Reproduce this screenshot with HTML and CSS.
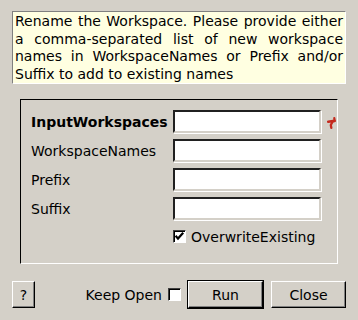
FILE: index.html
```html
<!DOCTYPE html>
<html>
<head>
<meta charset="utf-8">
<link rel="stylesheet" href="styles.css">
</head>
<body>
<div class="dlg">
  <div class="desc">Rename the Workspace. Please provide either a comma-separated list of new workspace names in WorkspaceNames or Prefix and/or Suffix to add to existing names</div>
  <div class="group">
    <div class="grid">
      <span class="lbl bold">InputWorkspaces</span>
      <span class="inp"></span>
      <svg class="req" width="9" height="12" viewBox="0 0 9 12"><path d="M1.2 4.8 L7.6 3.9" stroke="#c42a1e" stroke-width="2.6" stroke-linecap="round" fill="none"/><path d="M7.6 3.9 L7.3 1.2" stroke="#c42a1e" stroke-width="2.2" stroke-linecap="round" fill="none"/><path d="M5.4 5 L3.8 8 L4.3 10.8" stroke="#c42a1e" stroke-width="2.3" stroke-linecap="round" stroke-linejoin="round" fill="none"/></svg>
      <span class="lbl">WorkspaceNames</span>
      <span class="inp"></span>
      <span></span>
      <span class="lbl">Prefix</span>
      <span class="inp"></span>
      <span></span>
      <span class="lbl">Suffix</span>
      <span class="inp"></span>
      <span></span>
    </div>
    <div class="chkrow">
      <span class="chk"><svg width="11" height="11" viewBox="0 0 11 11"><path d="M1.6 4.8 L4 7.6 L9.2 1.8" stroke="#000" stroke-width="2.2" fill="none"/></svg></span>
      <span class="chktext">OverwriteExisting</span>
    </div>
  </div>
  <div class="footer">
    <span class="btn help">?</span>
    <span class="keep">Keep Open</span>
    <span class="chk"></span>
    <span class="default"><span class="btn run">Run</span></span>
    <span class="btn close">Close</span>
  </div>
</div>
</body>
</html>
```
FILE: styles.css
```css
html, body {
  margin: 0;
  padding: 0;
  background: #d4d0c8;
}
body {
  width: 358px;
  height: 320px;
  overflow: hidden;
  font-family: "DejaVu Sans", sans-serif;
  font-size: 14px;
  color: #000;
}
.dlg {
  display: flex;
  flex-direction: column;
}
.desc {
  margin: 11px 12px 0 12px;
  background: #ffffe1;
  border-top: 1px solid #808080;
  border-left: 1px solid #808080;
  border-right: 1px solid #ffffff;
  border-bottom: 1px solid #ffffff;
  padding: 1px 2px 0 2px;
  line-height: 17.5px;
  text-align: justify;
  height: 70px;
  box-sizing: content-box;
}
.group {
  margin: 15px 20px 0 20px;
  border-top: 1px solid #000;
  border-left: 1px solid #000;
  border-right: 1px solid #fff;
  border-bottom: 1px solid #fff;
  padding: 10px 0 0 10px;
  box-sizing: content-box;
  height: 153px;
}
.grid {
  display: grid;
  grid-template-columns: 136px 148px 9px;
  grid-auto-rows: 23px;
  row-gap: 6px;
  column-gap: 6px;
  align-items: center;
}
.lbl {
  white-space: nowrap;
}
.bold {
  font-weight: bold;
}
.inp {
  height: 23px;
  box-sizing: border-box;
  background: #fff;
  border-top: 2px solid #202020;
  border-left: 2px solid #202020;
  border-right: 2px solid #d4d0c8;
  border-bottom: 2px solid #d4d0c8;
  box-shadow: 1px 1px 0 #ffffff;
}
.req {
  display: block;
  align-self: start;
  margin-top: 7px;
}
.chkrow {
  display: flex;
  align-items: center;
  margin-top: 10px;
  padding-left: 142px;
  height: 13px;
}
.chk {
  width: 13px;
  height: 13px;
  box-sizing: border-box;
  background: #fff;
  border-top: 1px solid #404040;
  border-left: 1px solid #404040;
  border-right: 1px solid #ffffff;
  border-bottom: 1px solid #ffffff;
  box-shadow: inset 1px 1px 0 #000;
  display: flex;
  align-items: center;
  justify-content: center;
  flex: none;
}
.chk svg {
  display: block;
}
.chktext {
  margin-left: 5px;
}
.footer {
  display: flex;
  align-items: center;
  margin: 16px 12px 0 12px;
  height: 29px;
}
.btn {
  height: 27px;
  box-sizing: border-box;
  display: flex;
  align-items: center;
  justify-content: center;
  background: #d4d0c8;
  border-top: 1px solid #ffffff;
  border-left: 1px solid #ffffff;
  border-right: 1px solid #000;
  border-bottom: 1px solid #000;
  box-shadow: inset -1px -1px 0 #808080;
}
.help {
  width: 23px;
}
.keep {
  margin-left: auto;
  margin-right: 6px;
}
.default {
  margin-left: 6px;
  border: 1px solid #000;
  display: block;
}
.run {
  width: 75px;
}
.close {
  width: 75px;
  margin-left: 7px;
}
```
